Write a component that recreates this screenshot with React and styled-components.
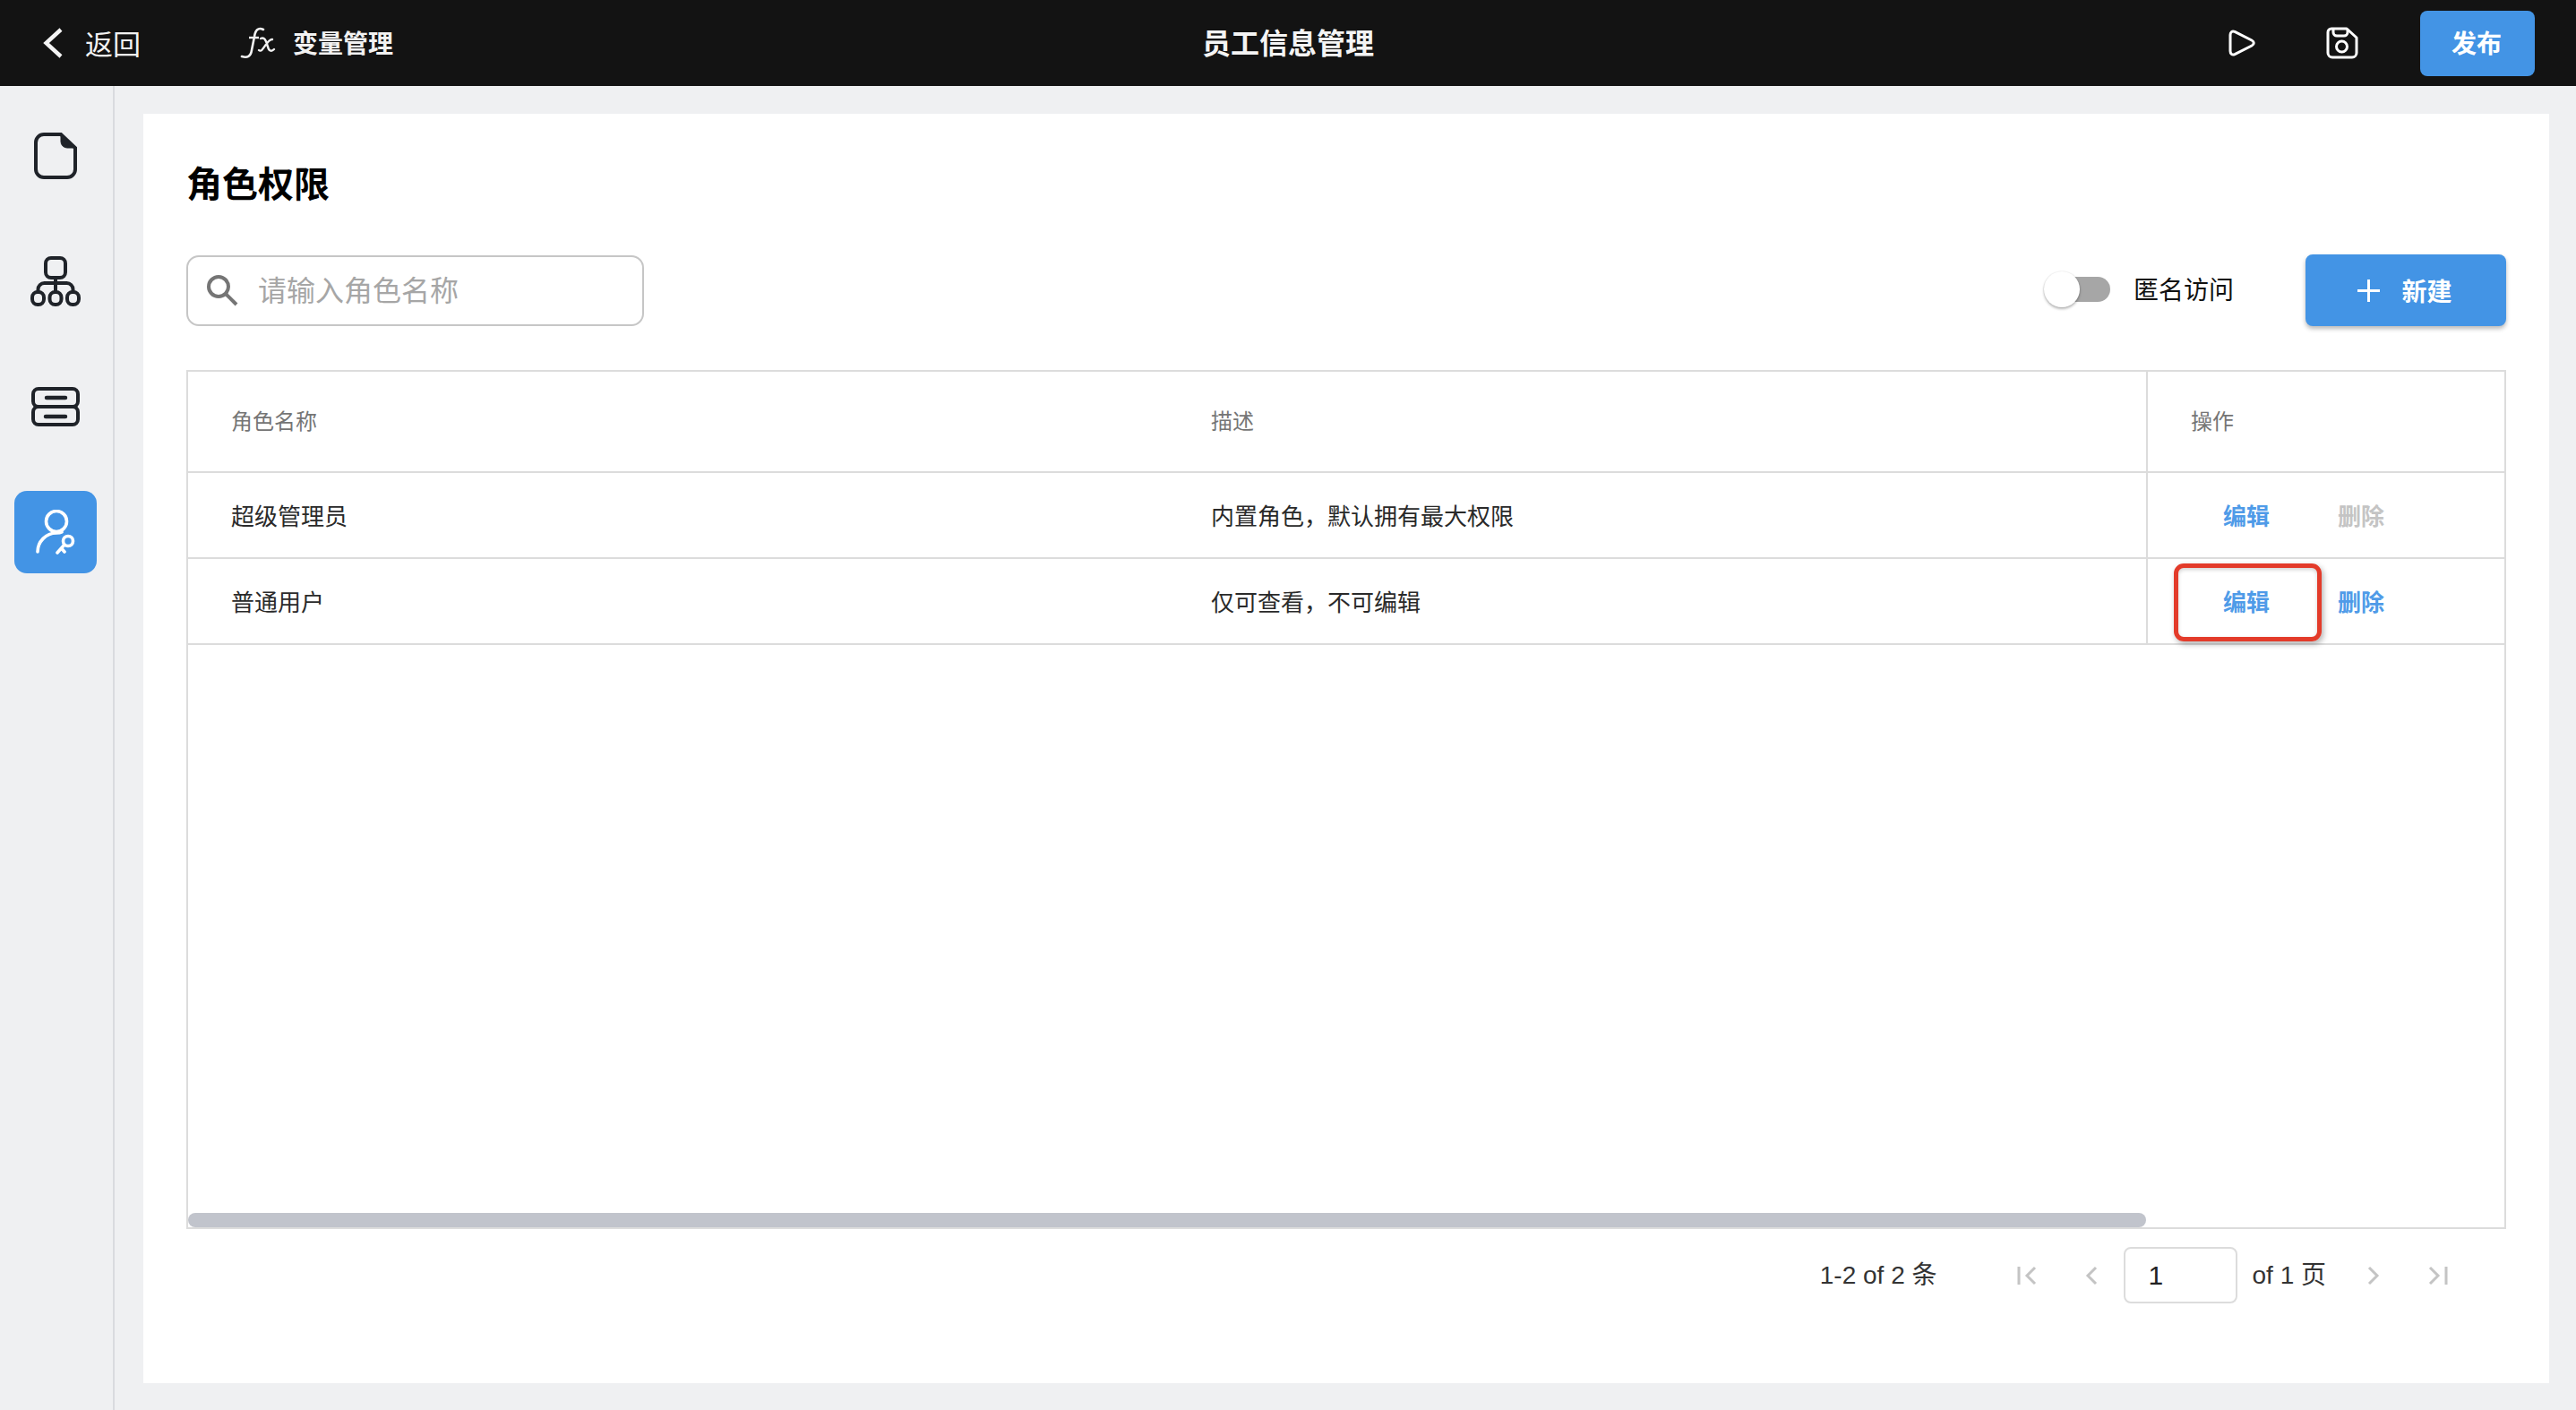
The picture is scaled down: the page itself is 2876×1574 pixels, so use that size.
import React from "react";
import styled, { createGlobalStyle } from "styled-components";

const Global = createGlobalStyle`
  html, body { margin: 0; padding: 0; width: 2876px; height: 1574px; overflow: hidden; background: #eff0f2; }
  * { box-sizing: border-box; }
  body { font-family: "Liberation Sans", "Noto Sans CJK SC", sans-serif; }
`;

const Page = styled.div`
  width: 2876px; height: 1574px; display: flex; flex-direction: column; background: #eff0f2;
`;
const Header = styled.header`
  height: 96px; flex: none; background: #131313; color: #fff;
  display: grid; grid-template-columns: 1fr auto 1fr; align-items: center;
  padding: 0 46px 0 48px;
`;
const HeaderLeft = styled.div`display: flex; align-items: center;`;
const HeaderRight = styled.div`display: flex; align-items: center; justify-content: flex-end;`;
const BackLabel = styled.span`
  font: 400 31px/1 "Noto Sans CJK SC", sans-serif; margin-left: 25px; margin-right: 111px; color: #f2f2f2; padding-bottom: 2px;
`;
const VarLabel = styled.span`
  font: 700 28px/1 "Noto Sans CJK SC", sans-serif; margin-left: 19px; color: #f2f2f2; padding-bottom: 3px;
`;
const HeaderTitle = styled.h1`
  margin: 0; font: 700 32px/1 "Noto Sans CJK SC", sans-serif; color: #f4f4f4; padding: 0 2px 4px 0;
`;
const HeaderIcon = styled.svg`
  display: block; flex: none; margin-right: ${p => p.$after}px;
`;
const PublishButton = styled.button`
  width: 128px; height: 73px; border: 0; border-radius: 8px; background: #4394e5; color: #fff;
  font: 700 28px/1 "Noto Sans CJK SC", sans-serif; padding: 0 2px 2px 0;
`;

const Body = styled.div`flex: 1; display: flex; min-height: 0;`;
const Sidebar = styled.nav`
  width: 128px; flex: none; border-right: 2px solid #d9dbdf; padding: 32px 0 0 16px;
  display: flex; flex-direction: column; gap: 48px;
`;
const NavItem = styled.div`
  width: 92px; height: 92px; border-radius: 14px; display: flex; align-items: center; justify-content: center;
  background: ${p => (p.$active ? "#4394e5" : "transparent")};
`;
const Main = styled.main`flex: 1; padding: 31px 30px 30px 32px; display: flex; min-width: 0;`;
const Panel = styled.section`
  flex: 1; background: #fff; padding: 48px 48px 89px 48px; display: flex; flex-direction: column; min-width: 0;
`;
const Title = styled.h2`
  margin: 0; font: 700 40px/56px "Noto Sans CJK SC", sans-serif; color: #000; height: 56px;
`;
const Toolbar = styled.div`
  margin-top: 53px; height: 80px; display: flex; align-items: center; justify-content: space-between; flex: none;
`;
const SearchBox = styled.label`
  width: 511px; height: 79px; border: 2px solid #c6c6c6; border-radius: 14px; display: flex; align-items: center;
  padding-left: 20px; gap: 22px; background: #fff;
`;
const SearchInput = styled.input`
  flex: 1; min-width: 0; border: 0; outline: 0; background: transparent; padding: 0 0 5px; height: 44px;
  font: 400 32px/38px "Noto Sans CJK SC", sans-serif; color: #333;
  &::placeholder { color: #a6a6a6; opacity: 1; }
`;
const ToolbarRight = styled.div`display: flex; align-items: center;`;
const Toggle = styled.div`position: relative; width: 74px; height: 40px; flex: none; display: flex; align-items: center; justify-content: flex-end; margin: -3px 0 0 2px;`;
const ToggleTrack = styled.div`width: 60px; height: 28px; border-radius: 14px; background: #a6a6a6;`;
const ToggleKnob = styled.div`
  position: absolute; left: 0; top: 0; width: 40px; height: 40px; border-radius: 50%; background: #fff;
  box-shadow: 0 2px 3px rgba(0,0,0,.28), 0 0 2px rgba(0,0,0,.12);
`;
const ToggleLabel = styled.span`
  margin-left: 26px; font: 400 28px/1 "Noto Sans CJK SC", sans-serif; color: #111; margin-right: 80px; padding-bottom: 4px;
`;
const CreateButton = styled.button`
  width: 224px; height: 80px; border: 0; border-radius: 8px; background: #4394e5; color: #fff; padding: 0 2px 0 0;
  display: flex; align-items: center; justify-content: center; gap: 24px;
  font: 700 28px/1 "Noto Sans CJK SC", sans-serif;
  box-shadow: 0 3px 5px rgba(0,0,0,.28);
`;
const Table = styled.div`
  margin-top: 49px; flex: 1; min-height: 0; border: 2px solid #dcdcdc; display: flex; flex-direction: column;
`;
const Row = styled.div`
  display: grid; grid-template-columns: 1094px 1092px 1fr; flex: none; height: ${p => p.$h}px; border-bottom: 2px solid #dcdcdc;
`;
const Cell = styled.div`
  padding-left: 48px; display: flex; align-items: center;
  font: 400 26px/1 "Noto Sans CJK SC", sans-serif; color: #2a2a2a;
`;
const HeadCell = styled(Cell)`font-size: 24px; color: #757575; padding-bottom: 3px;`;
const ActionHead = styled(HeadCell)`border-left: 2px solid #dcdcdc;`;
const ActionCell = styled.div`
  position: relative; border-left: 2px solid #dcdcdc; padding-left: 84px; display: flex; align-items: center; gap: 76px;
`;
const TextAction = styled.span`
  font: 700 26px/1 "Noto Sans CJK SC", sans-serif; color: ${p => (p.$disabled ? "#c4c4c4" : "#4f9be8")};
`;
const Highlight = styled.div`
  position: absolute; left: 29px; top: 5px; width: 165px; height: 87px; border: 5px solid #e33b2a; border-radius: 11px;
  box-shadow: 2px 3px 6px rgba(0,0,0,.3), inset 0 2px 4px rgba(0,0,0,.18);
`;
const ScrollTrack = styled.div`margin-top: auto; height: 16px; flex: none;`;
const ScrollThumb = styled.div`width: 2186px; height: 16px; border-radius: 8px; background: #c1c4cc;`;
const Pager = styled.div`
  margin-top: 20px; height: 63px; flex: none; padding-right: 44px; display: flex; align-items: center; justify-content: flex-end;
  font: 400 28px/1 "Liberation Sans", "Noto Sans CJK SC", sans-serif; color: #333;
`;
const PageCount = styled.span`margin-right: 68px;`;
const PageOf = styled.span`margin: 0 21px 0 17px;`;
const PageButton = styled.div`
  width: 64px; height: 40px; display: flex; align-items: center; justify-content: center;
  margin-right: ${p => p.$mr || 0}px;
`;
const PageInput = styled.input`
  width: 127px; height: 63px; border: 2px solid #dcdcdc; border-radius: 8px; padding: 0 0 0 26px; outline: 0; margin-left: 4px;
  font: 400 30px/1 "Liberation Sans", sans-serif; color: #222; background: #fff;
`;

const Svg = ({ w, h, children, ...rest }) => (
  <svg width={w} height={h} viewBox={`0 0 ${w} ${h}`} fill="none" {...rest}>{children}</svg>
);
const dark = "#1f2329";
const grey = "#c4c4c4";

export default function App() {
  return (
    <Page>
      <Global />
      <Header>
        <HeaderLeft>
          <Svg w={22} h={34}><path d="M20 2 3.5 17 20 32" stroke="#f4f4f4" strokeWidth="4.4" /></Svg>
          <BackLabel>返回</BackLabel>
          <Svg w={40} h={36}>
            <path d="M26 3C20 0 17 4 16 11L13 26C12 33 8 35 2 33" stroke="#f2f2f2" strokeWidth="2.6" strokeLinecap="round" />
            <path d="M10 12H21" stroke="#f2f2f2" strokeWidth="2.4" />
            <path d="M23 13C28 11 29 16 31 22C32 27 35 28 38 25M36 14C32 13 28 22 25 25C24 27 22 27 21 26" stroke="#f2f2f2" strokeWidth="2.4" strokeLinecap="round" />
          </Svg>
          <VarLabel>变量管理</VarLabel>
        </HeaderLeft>
        <HeaderTitle>员工信息管理</HeaderTitle>
        <HeaderRight>
          <HeaderIcon as={Svg} w={30} h={30} $after={79}>
            <path d="M2 6C2 3 4 1.2 7 2.4L26 12C29 13.6 29 16.4 26 18L7 27.6C4 28.8 2 27 2 24Z" stroke="#fff" strokeWidth="3" strokeLinejoin="round" />
          </HeaderIcon>
          <HeaderIcon as={Svg} w={36} h={36} $after={69}>
            <path d="M6 2H23L34 12V29A5 5 0 0 1 29 34H7A5 5 0 0 1 2 29V6A4 4 0 0 1 6 2Z" stroke="#fff" strokeWidth="3" strokeLinejoin="round" />
            <path d="M8 2V6A4 4 0 0 0 12 10H20A4 4 0 0 0 24 6V3" stroke="#fff" strokeWidth="3" />
            <circle cx="17.5" cy="22" r="6" stroke="#fff" strokeWidth="3" />
          </HeaderIcon>
          <PublishButton>发布</PublishButton>
        </HeaderRight>
      </Header>
      <Body>
        <Sidebar>
          <NavItem>
            <Svg w={48} h={52}>
              <path d="M11 2H30L46 17V41A9 9 0 0 1 37 50H11A9 9 0 0 1 2 41V11A9 9 0 0 1 11 2Z" stroke={dark} strokeWidth="4" />
              <path d="M30 2V10A7 7 0 0 0 37 17H46Z" fill={dark} stroke={dark} strokeWidth="1" strokeLinejoin="round" />
            </Svg>
          </NavItem>
          <NavItem>
            <Svg w={56} h={56}>
              <rect x="17" y="2" width="22" height="22" rx="6" stroke={dark} strokeWidth="4" />
              <rect x="2" y="40" width="13" height="14" rx="6" stroke={dark} strokeWidth="4" />
              <rect x="21.5" y="40" width="13" height="14" rx="6" stroke={dark} strokeWidth="4" />
              <rect x="41" y="40" width="13" height="14" rx="6" stroke={dark} strokeWidth="4" />
              <path d="M28 24V40M8.5 40V37A7 7 0 0 1 15.5 30H40.5A7 7 0 0 1 47.5 37V40" stroke={dark} strokeWidth="4" />
            </Svg>
          </NavItem>
          <NavItem>
            <Svg w={54} h={44}>
              <rect x="2" y="2" width="50" height="20" rx="6" stroke={dark} strokeWidth="4" />
              <rect x="2" y="22" width="50" height="20" rx="6" stroke={dark} strokeWidth="4" />
              <path d="M17 12H38M16 33H38" stroke={dark} strokeWidth="4.5" strokeLinecap="round" />
            </Svg>
          </NavItem>
          <NavItem $active>
            <Svg w={46} h={50}>
              <circle cx="24" cy="13" r="11.5" stroke="#fff" strokeWidth="3.6" />
              <path d="M3 47C3 36 12 26 24 26C26 26 28 26 30 25" stroke="#fff" strokeWidth="3.6" strokeLinecap="round" />
              <circle cx="37" cy="35" r="5.5" stroke="#fff" strokeWidth="3.6" />
              <path d="M33 39L25 48M29.5 43L33 47" stroke="#fff" strokeWidth="3.6" strokeLinecap="round" />
            </Svg>
          </NavItem>
        </Sidebar>
        <Main>
          <Panel>
            <Title>角色权限</Title>
            <Toolbar>
              <SearchBox>
                <Svg w={36} h={36}>
                  <circle cx="14" cy="14" r="11" stroke="#757575" strokeWidth="4" />
                  <path d="M22 22L34 34" stroke="#757575" strokeWidth="4" />
                </Svg>
                <SearchInput placeholder="请输入角色名称" />
              </SearchBox>
              <ToolbarRight>
                <Toggle><ToggleTrack /><ToggleKnob /></Toggle>
                <ToggleLabel>匿名访问</ToggleLabel>
                <CreateButton>
                  <Svg w={25} h={25}><path d="M12.5 0V25M0 12.5H25" stroke="#fff" strokeWidth="3" /></Svg>
                  新建
                </CreateButton>
              </ToolbarRight>
            </Toolbar>
            <Table>
              <Row $h={113}>
                <HeadCell>角色名称</HeadCell>
                <HeadCell>描述</HeadCell>
                <ActionHead>操作</ActionHead>
              </Row>
              <Row $h={96}>
                <Cell>超级管理员</Cell>
                <Cell>内置角色，默认拥有最大权限</Cell>
                <ActionCell>
                  <TextAction>编辑</TextAction>
                  <TextAction $disabled>删除</TextAction>
                </ActionCell>
              </Row>
              <Row $h={96}>
                <Cell>普通用户</Cell>
                <Cell>仅可查看，不可编辑</Cell>
                <ActionCell>
                  <TextAction>编辑</TextAction>
                  <TextAction>删除</TextAction>
                  <Highlight />
                </ActionCell>
              </Row>
              <ScrollTrack><ScrollThumb /></ScrollTrack>
            </Table>
            <Pager>
              <PageCount>1-2 of 2 条</PageCount>
              <PageButton $mr={8}>
                <Svg w={22} h={22}><path d="M2 1V21M20 2L11 11L20 20" stroke={grey} strokeWidth="3" /></Svg>
              </PageButton>
              <PageButton>
                <Svg w={14} h={22}><path d="M12 2L3 11L12 20" stroke={grey} strokeWidth="3" /></Svg>
              </PageButton>
              <PageInput readOnly value="1" />
              <PageOf>of 1 页</PageOf>
              <PageButton $mr={8}>
                <Svg w={14} h={22}><path d="M2 2L11 11L2 20" stroke={grey} strokeWidth="3" /></Svg>
              </PageButton>
              <PageButton>
                <Svg w={22} h={22}><path d="M20 1V21M2 2L11 11L2 20" stroke={grey} strokeWidth="3" /></Svg>
              </PageButton>
            </Pager>
          </Panel>
        </Main>
      </Body>
    </Page>
  );
}
